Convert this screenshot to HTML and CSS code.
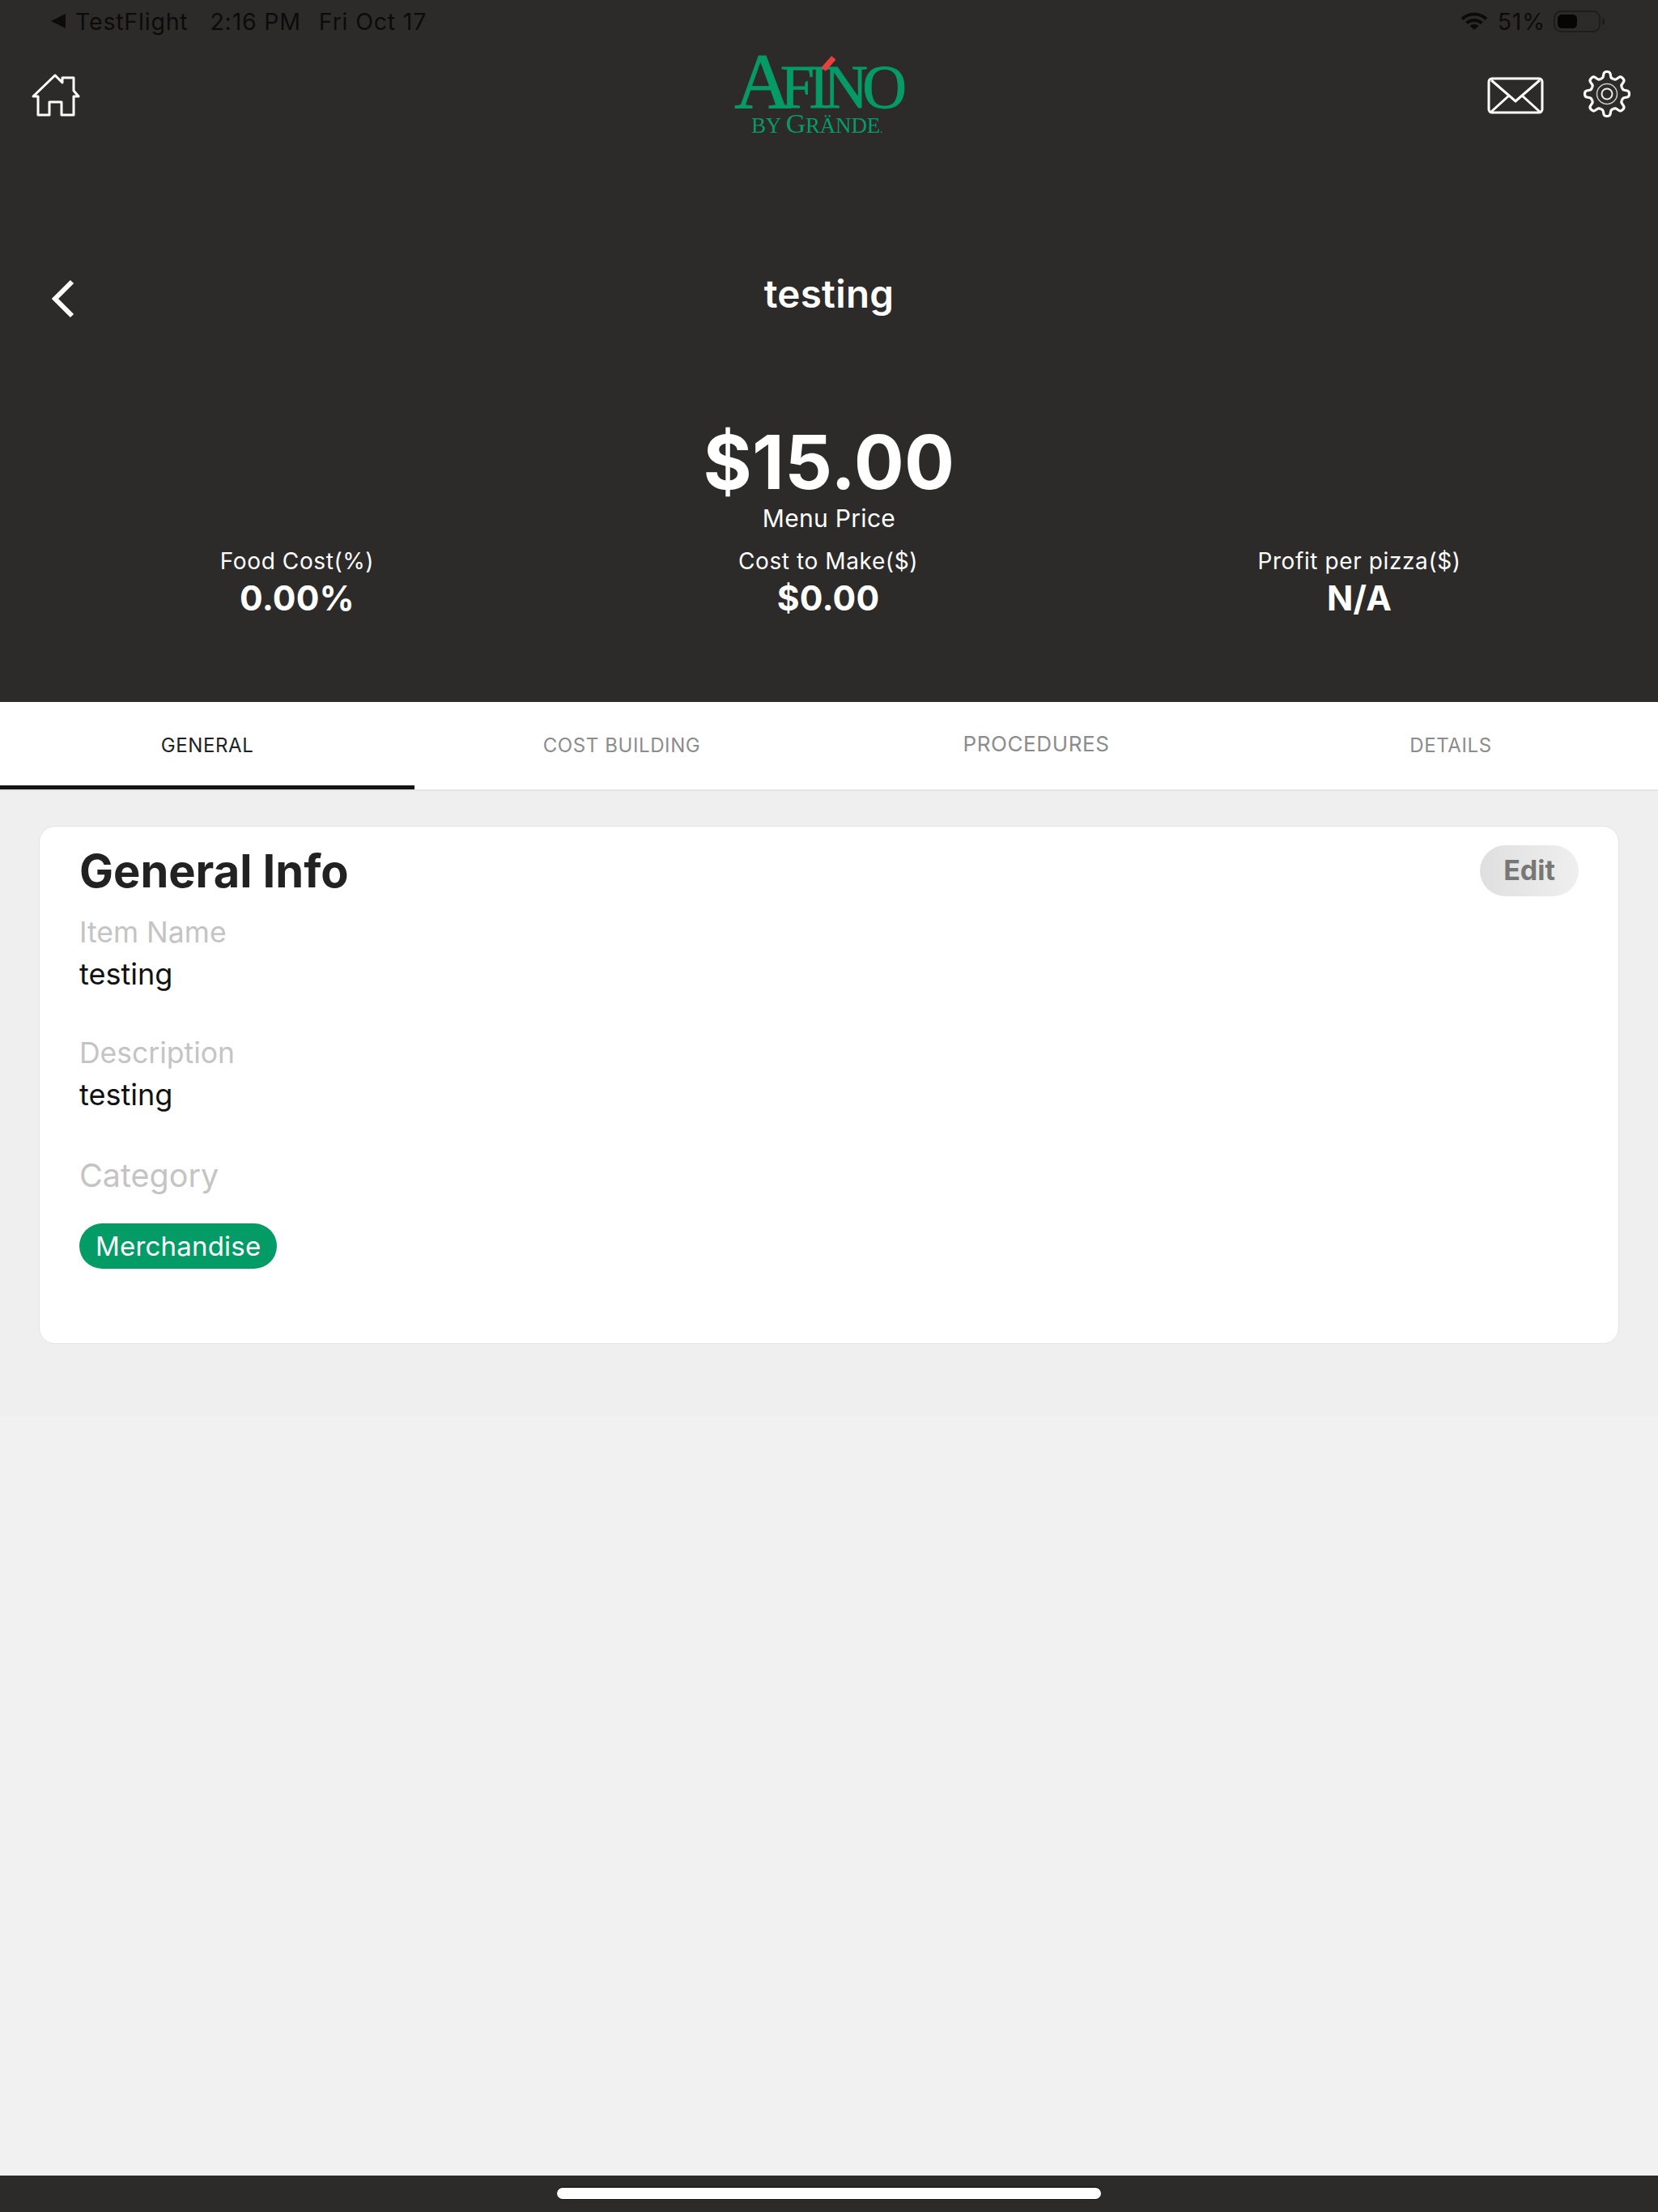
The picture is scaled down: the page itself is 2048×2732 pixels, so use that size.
FILE: index.html
```html
<!DOCTYPE html>
<html lang="en">
<head>
<meta charset="utf-8">
<title>testing</title>
<link rel="stylesheet" href="styles.css">
</head>
<body>
<div class="page">
  <header class="hero">
    <div class="status">
      <div class="status-left">
        <span class="back-tri"></span><span class="s-app">TestFlight</span><span class="s-time">2:16 PM</span><span class="s-date">Fri Oct 17</span>
      </div>
      <div class="status-right">
        <svg class="wifi" viewBox="0 0 34 24" width="34" height="24"><path d="M2 9.500C10.500 1.500 23.500 1.500 32 9.500M7.500 14.500C13 9.800 21 9.800 26.500 14.500" fill="none" stroke="#0b0b0b" stroke-width="4"/><path d="M11.500 18C15 15 19 15 22.500 18L17 23Z" fill="#0b0b0b"/></svg>
        <span class="s-pct">51%</span>
        <span class="battery"><span class="battery-fill"></span></span><span class="battery-tip"></span>
      </div>
    </div>
    <div class="appbar">
      <svg class="ico-home" viewBox="0 0 60 53" width="60" height="53"><path d="M8 28H2L29 2L38 11V5H52V21L58 28H52V51H37V35H22V51H8Z" fill="none" stroke="#fff" stroke-width="3" stroke-linejoin="round"/></svg>
      <div class="logo">
        <div class="logo-main"><span class="logo-a">A</span>FINO<span class="logo-accent"></span></div>
        <div class="logo-sub">BY <span class="logo-g">G</span>RÄNDE<span class="logo-dot">.</span></div>
      </div>
      <div class="appbar-right">
        <svg class="ico-mail" viewBox="0 0 70 46" width="70" height="46"><rect x="2" y="2" width="66" height="42" rx="4" fill="none" stroke="#fff" stroke-width="3"/><path d="M5 4L35 30L65 4M5 43L27 23M65 43L43 23" fill="none" stroke="#fff" stroke-width="3"/></svg>
        <svg class="ico-gear" viewBox="-30 -30 60 60" width="60" height="60">
          <g fill="none" stroke="#fff" stroke-width="3.200" stroke-linejoin="round">
            <path id="tooth" d="M-7.650-18.480Q-5-19.500-4.800-21L-4-25Q-3.500-27.500 0-27.500Q3.500-27.500 4-25L4.800-21Q5-19.500 7.650-18.480"/>
            <use href="#tooth" transform="rotate(45)"/>
            <use href="#tooth" transform="rotate(90)"/>
            <use href="#tooth" transform="rotate(135)"/>
            <use href="#tooth" transform="rotate(180)"/>
            <use href="#tooth" transform="rotate(225)"/>
            <use href="#tooth" transform="rotate(270)"/>
            <use href="#tooth" transform="rotate(315)"/>
          </g>
          <circle r="12.500" fill="none" stroke="#ccc" stroke-width="1.500"/>
          <circle r="6.500" fill="none" stroke="#eee" stroke-width="2"/>
        </svg>
      </div>
    </div>
    <div class="titlebar">
      <svg class="ico-back" viewBox="0 0 30 48" width="30" height="48"><path d="M26 3L5 24L26 45" fill="none" stroke="#fff" stroke-width="6"/></svg>
      <h1 class="title">testing</h1>
    </div>
    <div class="price">$15.00</div>
    <div class="price-label">Menu Price</div>
    <div class="stats">
      <div class="stat"><div class="stat-label">Food Cost(%)</div><div class="stat-value">0.00%</div></div>
      <div class="stat"><div class="stat-label">Cost to Make($)</div><div class="stat-value">$0.00</div></div>
      <div class="stat"><div class="stat-label">Profit per pizza($)</div><div class="stat-value">N/A</div></div>
    </div>
  </header>

  <nav class="tabs">
    <div class="tab tab-active">GENERAL</div>
    <div class="tab">COST BUILDING</div>
    <div class="tab tab-large">PROCEDURES</div>
    <div class="tab">DETAILS</div>
  </nav>

  <main class="content">
    <section class="card">
      <div class="card-head">
        <h2 class="card-title">General Info</h2>
        <div class="edit">Edit</div>
      </div>
      <div class="label">Item Name</div>
      <div class="value">testing</div>
      <div class="label label-next">Description</div>
      <div class="value">testing</div>
      <div class="label-cat">Category</div>
      <div class="chip">Merchandise</div>
    </section>
    <div class="filler"></div>
  </main>

  <footer class="homebar"><span class="home-indicator"></span></footer>
</div>
</body>
</html>
```

FILE: styles.css
```css
* { box-sizing: border-box; }
html, body { margin: 0; padding: 0; }
body { font-family: Inter, "Liberation Sans", sans-serif; background: #f1f1f1; }
.page { width: 2048px; height: 2732px; display: flex; flex-direction: column; overflow: hidden; }

.hero { height: 867px; background: #2c2b2a; color: #fff; display: flex; flex-direction: column; flex: none; }

.status { height: 52px; display: flex; justify-content: space-between; align-items: center; padding: 0 66px 0 63px; color: #0b0b0b; font-size: 28.500px; letter-spacing: 0.8px; }
.status-left { display: flex; align-items: center; }
.back-tri { width: 0; height: 0; border-style: solid; border-width: 9px 18px 9px 0; border-color: transparent #0b0b0b transparent transparent; margin-right: 12px; }
.s-time { margin-left: 27px; }
.s-date { margin-left: 22px; }
.status-right { display: flex; align-items: center; }
.s-pct { margin-left: 12px; margin-right: 10px; }
.battery { width: 58px; height: 27px; border: 2px solid #1d1d1c; border-radius: 9px; padding: 3px; display: block; }
.battery-fill { display: block; width: 24px; height: 100%; background: #050505; border-radius: 5px; }
.battery-tip { width: 3px; height: 9px; background: #1d1d1c; margin-left: 2px; border-radius: 0 3px 3px 0; }

.appbar { height: 130px; position: relative; display: flex; justify-content: space-between; align-items: center; padding: 0 33px 0 39px; }
.appbar-right { display: flex; align-items: center; gap: 48px; }
.ico-mail { margin-top: 1px; }
.ico-gear { margin-top: -2px; }

.logo { position: absolute; left: 907px; top: 10px; width: 215px; color: #069a68; font-family: "Liberation Serif", serif; }
.logo-main { position: relative; height: 76px; font-size: 76px; line-height: 76px; letter-spacing: -7px; white-space: nowrap; -webkit-text-stroke: 0.8px #069a68; }
.logo-a { font-size: 98px; letter-spacing: -14px; }
.logo-accent { position: absolute; left: 113px; top: 7px; width: 7px; height: 19px; background: #e8403f; transform: rotate(42deg); border-radius: 1px; }
.logo-sub { padding-left: 21px; font-size: 27px; line-height: 30px; letter-spacing: -0.2px; white-space: nowrap; }
.logo-g { font-size: 34px; }
.logo-dot { font-size: 14px; }

.titlebar { height: 120px; margin-top: 125px; position: relative; display: flex; align-items: center; justify-content: center; }
.ico-back { position: absolute; left: 63px; top: 38px; }
.title { margin: 0; font-size: 47.500px; font-weight: 600; line-height: 56px; letter-spacing: 0.3px; position: relative; top: -4px; }

.price { margin-top: 94px; text-align: center; font-size: 92px; font-weight: 700; line-height: 100px; letter-spacing: 0.4px; }
.price-label { text-align: center; font-size: 30px; line-height: 36px; margin-top: 1px; letter-spacing: 0.3px; }
.stats { display: grid; grid-template-columns: repeat(3, 656px); padding: 0 39px; margin-top: 17px; }
.stat { text-align: center; }
.stat-label { font-size: 28px; line-height: 36px; letter-spacing: 0.6px; }
.stat-value { margin-top: 2px; font-size: 42.500px; font-weight: 700; line-height: 52px; letter-spacing: 0.2px; }

.tabs { height: 110px; background: #fff; display: grid; grid-template-columns: repeat(4, 512px); border-bottom: 2px solid #e4e4e4; flex: none; }
.tab { display: flex; align-items: center; justify-content: center; height: 108px; font-size: 24px; letter-spacing: 0.6px; color: #8c8c8c; padding-bottom: 1px; }
.tab-active { color: #222; box-shadow: inset 0 -5px 0 #141414; }
.tab-large { font-size: 26px; padding-bottom: 5px; }

.content { flex: 1; background: #f0eff0; padding: 43px 48px 0; display: flex; flex-direction: column; position: relative; }
.filler { position: absolute; left: 0; right: 0; top: 772px; bottom: 0; background: #f1f1f1; }
.card { height: 640px; background: #fff; border: 1.500px solid #e4e4e4; border-radius: 20px; padding: 0 49px; display: flex; flex-direction: column; align-items: flex-start; position: relative; z-index: 1; }
.card-head { width: 100%; height: 96px; display: flex; justify-content: space-between; align-items: flex-start; }
.card-title { margin: 17px 0 0; font-size: 56px; font-weight: 700; line-height: 76px; color: #222; letter-spacing: 0; }
.edit { margin-top: 23px; width: 122px; height: 63px; border-radius: 32px; padding-bottom: 2px; background: linear-gradient(to right, #dfdfdf, #efefef); color: #777; font-size: 34px; font-weight: 700; display: flex; align-items: center; justify-content: center; }
.label { margin-top: 13px; color: #c4c4c4; font-size: 35.500px; line-height: 44px; }
.label-next { margin-top: 54px; }
.value { margin-top: 7px; color: #111; font-size: 36px; line-height: 44px; }
.label-cat { margin-top: 54px; color: #c4c4c4; font-size: 39.500px; line-height: 48px; }
.chip { margin-top: 35px; height: 56px; padding: 0 20px; border-radius: 28px; background: #049c66; color: #fff; font-size: 33px; letter-spacing: 0.2px; display: flex; align-items: center; }

.homebar { height: 45px; background: #2c2b2a; flex: none; display: flex; justify-content: center; padding-top: 15px; }
.home-indicator { width: 672px; height: 14px; background: #fff; border-radius: 7px; box-shadow: 0 -1px 0 #000, 0 1px 0 #1a1512; }
```
